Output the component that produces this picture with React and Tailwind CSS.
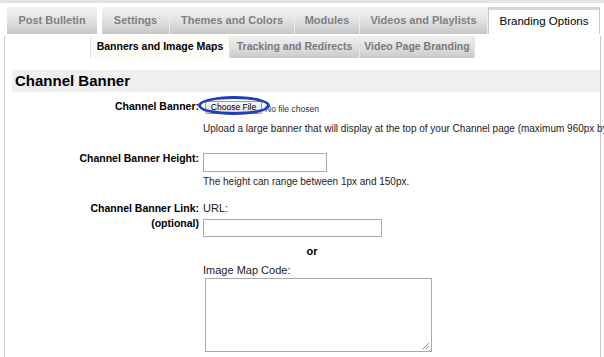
import React from "react";

const mainTabs = [
  { label: "Post Bulletin", w: "w-[90px]", gap: true },
  { label: "Settings", w: "w-[68px]" },
  { label: "Themes and Colors", w: "w-[125px]" },
  { label: "Modules", w: "w-[65px]" },
  { label: "Videos and Playlists", w: "w-[128px]" },
];

const subTabs = [
  { label: "Tracking and Redirects", w: "w-[130px]" },
  { label: "Video Page Branding", w: "w-[115px]" },
];

const App = () => {
  return (
    <div className="w-[604px] h-[357px] overflow-hidden bg-white font-['Liberation_Sans',Arial,sans-serif] text-black">
      <div className="h-[3px] bg-[#e3e3e3]" />

      {/* main tab strip */}
      <div className="flex pl-[7px] pt-[4px] h-[31px]">
        {mainTabs.map((t) => (
          <div
            key={t.label}
            className={`${t.w} ${t.gap ? "mr-[5px]" : "border-r border-[#ececec]"} flex items-center justify-center whitespace-nowrap bg-gradient-to-b from-[#f2f2f2] via-[#e2e2e2] to-[#c6c6c6] text-[11px] font-bold text-[#808080]`}
          >
            {t.label}
          </div>
        ))}
        <div className="w-[112px] flex items-center justify-center whitespace-nowrap bg-white border-x border-t border-[#c8c8c8] border-t-[3px] border-t-[#d6d6d6] text-[11.5px] text-black">
          Branding Options
        </div>
      </div>

      {/* content panel */}
      <div className="ml-[4px] w-[597px] h-[323px] border-l border-r border-[#c8c8c8]">
        <div className="flex ml-[85px] h-[22px] mt-[2px]">
          <div className="w-[140px] flex items-center justify-center whitespace-nowrap bg-[#fdfdf6] border-x border-[#e2e2e2] text-[10.5px] font-bold text-black">
            Banners and Image Maps
          </div>
          {subTabs.map((t) => (
            <div
              key={t.label}
              className={`${t.w} flex items-center justify-center whitespace-nowrap border-r border-[#e6e6e6] bg-gradient-to-b from-[#f0f0f0] via-[#e0e0e0] to-[#cacaca] text-[10.5px] font-bold text-[#7a7a7a]`}
            >
              {t.label}
            </div>
          ))}
        </div>

        <div className="mt-[12px] ml-[7px] h-[22px] bg-[#efefef] flex items-center pl-[3px] text-[15px] font-bold">
          Channel Banner
        </div>

        <div className="grid grid-cols-[198px_1fr] text-[10.5px] leading-[14px] mt-[2px]">
          <div className="text-right font-bold pt-[5px] pr-[4px] whitespace-nowrap">Channel Banner:</div>
          <div className="pt-[3px]">
            <div className="flex items-center h-[19px]">
              <div className="relative ml-[2px]">
                <button className="h-[13px] w-[57px] border border-[#9a9a9a] rounded-[2px] bg-gradient-to-b from-[#f8f8f8] to-[#dcdcdc] text-[8.5px] leading-none text-black">
                  Choose File
                </button>
                <div className="absolute -left-[7px] -top-[3px] w-[72px] h-[19px] rounded-[50%] border-[3px] border-[#1f3fb8]" />
              </div>
              <span className="ml-[3px] mt-[5px] text-[8.5px] text-[#333] whitespace-nowrap">No file chosen</span>
            </div>
            <div className="mt-[6px] text-[10px] whitespace-nowrap text-[#222]">
              Upload a large banner that will display at the top of your Channel page (maximum 960px by 150px).
            </div>
          </div>

          <div className="text-right font-bold pt-[15px] pr-[4px] whitespace-nowrap">Channel Banner Height:</div>
          <div className="pt-[17px]">
            <div className="w-[124px] h-[19px] border border-[#aaaaaa] bg-white" />
            <div className="mt-[3px] text-[10px] text-[#222] whitespace-nowrap">The height can range between 1px and 150px.</div>
          </div>

          <div className="text-right font-bold pt-[12px] pr-[4px] leading-[15px] whitespace-nowrap">
            Channel Banner Link:
            <br />
            (optional)
          </div>
          <div className="pt-[12px]">
            <div className="leading-[15px] text-[11px] text-[#222]">URL:</div>
            <div className="w-[179px] h-[18px] mt-[3px] border border-[#aaaaaa] bg-white" />
            <div className="w-[218px] text-center font-bold text-[11px] mt-[7px]">or</div>
            <div className="mt-[5px] text-[11px] text-[#222]">Image Map Code:</div>
            <div className="relative w-[227px] h-[74px] mt-[1px] ml-[2px] border border-[#aaaaaa] bg-white">
              <svg className="absolute right-[1px] bottom-[1px]" width="8" height="8" viewBox="0 0 8 8">
                <path d="M7 1 L1 7 M7 4 L4 7" stroke="#8a8a8a" strokeWidth="1" />
              </svg>
            </div>
          </div>
        </div>
      </div>
    </div>
  );
};

export default App;
